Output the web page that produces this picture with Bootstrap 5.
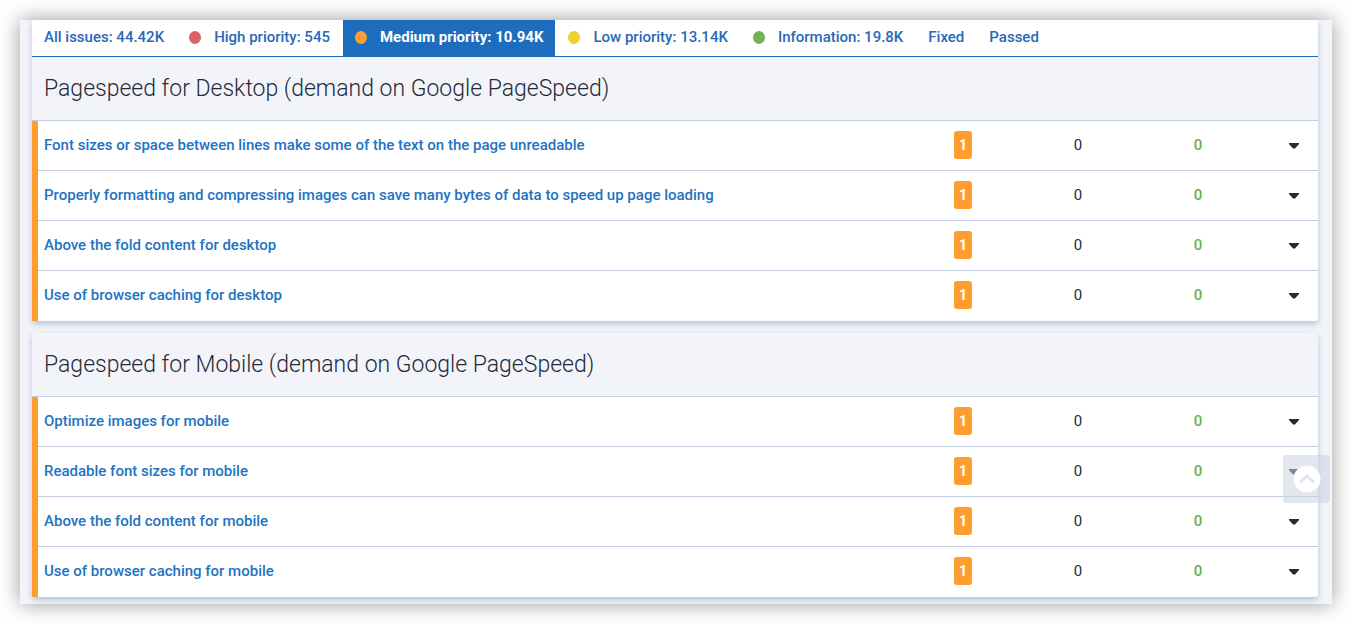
<!DOCTYPE html>
<html lang="en">
<head>
<meta charset="utf-8">
<meta name="viewport" content="width=device-width, initial-scale=1">
<title>Site audit issues</title>
<link href="https://cdn.jsdelivr.net/npm/bootstrap@5.3.0/dist/css/bootstrap.min.css" rel="stylesheet">
<style>
  body { font-family: Roboto, "Liberation Sans", sans-serif; font-size: 15px; line-height: 20px; color: #252a3a; padding: 20px; }
  a { color: #2273c3; text-decoration: none; }
  .audit { background: #f3f4f9; padding: 0 14px 7px 12px; box-shadow: 0 0 20px rgba(0,0,0,.4); }
  .panel { background: #fff; border-radius: 0 0 3px 3px; box-shadow: 0 3px 6px #b4c3da; }
  .panel + .panel { margin-top: 12px; }
  .issue-tabs { border-bottom: 1px solid #1c6dbe; column-gap: 1px; }
  .issue-tabs .nav-link { color: #2a68b8; font-weight: 500; padding: 7px 12px 9px; border-radius: 0; display: flex; align-items: center; gap: 13px; }
  .issue-tabs .nav-link.active { background: #1c6dbe; color: #fff; font-weight: 700; }
  .dot { width: 12px; height: 13px; border-radius: 50%; }
  .dot-high { background: #d66464; }
  .dot-medium { background: #ff9d2e; }
  .dot-low { background: #f0d132; }
  .dot-info { background: #72b355; }
  .panel-title { background: #f3f4f9; font-size: 23px; line-height: 30px; font-weight: 300; padding: 17px 12px 16px; border-bottom: 1px solid #c3cfe0; margin: 0; }
  .issues { width: 100%; table-layout: fixed; border-collapse: separate; border-spacing: 0; border-left: 6px solid #ff9d2e; }
  .issues td { height: 50px; padding: 0 0 2px; vertical-align: middle; text-align: center; border-bottom: 1px solid #c3cfe0; }
  .issues tr:last-child td { border-bottom-color: transparent; }
  .issues td:first-child { text-align: left; padding-left: 6px; font-weight: 500; }
  .issues td:last-child { padding-bottom: 0; }
  .col-found { width: 134px; }
  .col-ignored { width: 96px; }
  .col-fixed { width: 144px; }
  .col-more { width: 48px; }
  .count { display: inline-block; background: #ff9d2e; color: #fff; font-weight: 700; line-height: 28px; width: 18px; border-radius: 3px; vertical-align: middle; }
  .issues .solved { color: #6bb04a; font-weight: 500; }
  .more { border: 0; background: none; padding: 8px; display: block; margin: 0 auto; line-height: 0; }
  .to-top { right: 2px; bottom: 101px; width: 47px; height: 48px; border: 0; padding: 0; border-radius: 3px; background: rgba(201,209,226,.55); }
</style>
</head>
<body>
<svg class="d-none"><symbol id="caret" viewBox="0 0 10 6"><path d="M0 0h10v1L6 5.5H4L0 1z" fill="#252a3a"/></symbol></svg>
<main class="audit position-relative">
  <section class="panel">
    <nav class="nav issue-tabs" aria-label="Issue filters">
      <a class="nav-link" href="#">All issues: 44.42K</a>
      <a class="nav-link" href="#"><span class="dot dot-high"></span>High priority: 545</a>
      <a class="nav-link active" aria-current="page" href="#"><span class="dot dot-medium"></span>Medium priority: 10.94K</a>
      <a class="nav-link" href="#"><span class="dot dot-low"></span>Low priority: 13.14K</a>
      <a class="nav-link" href="#"><span class="dot dot-info"></span>Information: 19.8K</a>
      <a class="nav-link" href="#">Fixed</a>
      <a class="nav-link" href="#">Passed</a>
    </nav>
    <h2 class="panel-title">Pagespeed for Desktop (demand on Google PageSpeed)</h2>
    <table class="issues">
      <colgroup><col><col class="col-found"><col class="col-ignored"><col class="col-fixed"><col class="col-more"></colgroup>
      <tbody>
        <tr><td><a href="#">Font sizes or space between lines make some of the text on the page unreadable</a></td><td><span class="count">1</span></td><td>0</td><td class="solved">0</td><td><button class="more" type="button" aria-label="Show details"><svg width="10" height="6"><use href="#caret"/></svg></button></td></tr>
        <tr><td><a href="#">Properly formatting and compressing images can save many bytes of data to speed up page loading</a></td><td><span class="count">1</span></td><td>0</td><td class="solved">0</td><td><button class="more" type="button" aria-label="Show details"><svg width="10" height="6"><use href="#caret"/></svg></button></td></tr>
        <tr><td><a href="#">Above the fold content for desktop</a></td><td><span class="count">1</span></td><td>0</td><td class="solved">0</td><td><button class="more" type="button" aria-label="Show details"><svg width="10" height="6"><use href="#caret"/></svg></button></td></tr>
        <tr><td><a href="#">Use of browser caching for desktop</a></td><td><span class="count">1</span></td><td>0</td><td class="solved">0</td><td><button class="more" type="button" aria-label="Show details"><svg width="10" height="6"><use href="#caret"/></svg></button></td></tr>
      </tbody>
    </table>
  </section>
  <section class="panel">
    <h2 class="panel-title">Pagespeed for Mobile (demand on Google PageSpeed)</h2>
    <table class="issues">
      <colgroup><col><col class="col-found"><col class="col-ignored"><col class="col-fixed"><col class="col-more"></colgroup>
      <tbody>
        <tr><td><a href="#">Optimize images for mobile</a></td><td><span class="count">1</span></td><td>0</td><td class="solved">0</td><td><button class="more" type="button" aria-label="Show details"><svg width="10" height="6"><use href="#caret"/></svg></button></td></tr>
        <tr><td><a href="#">Readable font sizes for mobile</a></td><td><span class="count">1</span></td><td>0</td><td class="solved">0</td><td><button class="more" type="button" aria-label="Show details"><svg width="10" height="6"><use href="#caret"/></svg></button></td></tr>
        <tr><td><a href="#">Above the fold content for mobile</a></td><td><span class="count">1</span></td><td>0</td><td class="solved">0</td><td><button class="more" type="button" aria-label="Show details"><svg width="10" height="6"><use href="#caret"/></svg></button></td></tr>
        <tr><td><a href="#">Use of browser caching for mobile</a></td><td><span class="count">1</span></td><td>0</td><td class="solved">0</td><td><button class="more" type="button" aria-label="Show details"><svg width="10" height="6"><use href="#caret"/></svg></button></td></tr>
      </tbody>
    </table>
  </section>
  <button class="to-top position-absolute d-flex align-items-center justify-content-center" type="button" aria-label="Back to top">
    <svg width="28" height="28" viewBox="0 0 28 28"><circle cx="14" cy="14" r="13.5" fill="#fff"/><path d="M7 17.5l7-6.5 7 6.5" fill="none" stroke="#dfe4ee" stroke-width="3"/></svg>
  </button>
</main>
<script src="https://cdn.jsdelivr.net/npm/bootstrap@5.3.0/dist/js/bootstrap.bundle.min.js"></script>
</body>
</html>
